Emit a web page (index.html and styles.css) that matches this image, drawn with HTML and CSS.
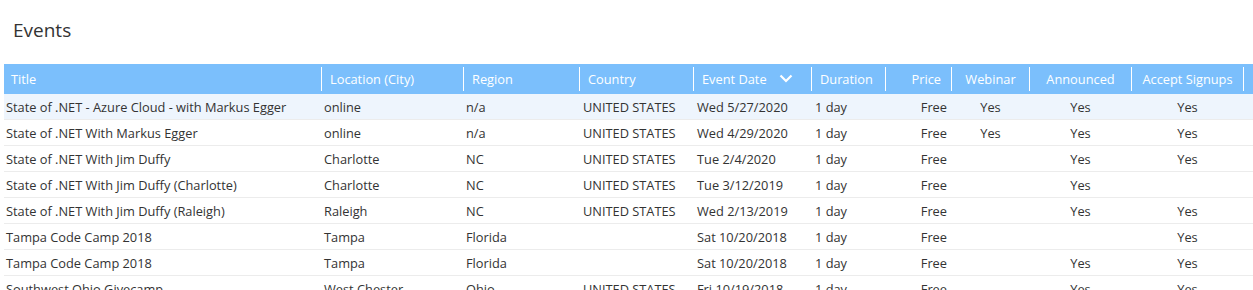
FILE: index.html
```html
<!DOCTYPE html>
<html>
<head>
<meta charset="utf-8">
<link rel="stylesheet" href="styles.css">
</head>
<body>
<div class="page">
  <h1 class="page-title">Events</h1>
  <table class="grid">
    <colgroup>
      <col class="c-title"><col class="c-loc"><col class="c-region"><col class="c-country"><col class="c-date"><col class="c-dur"><col class="c-price"><col class="c-web"><col class="c-ann"><col class="c-sign"><col class="c-fill">
    </colgroup>
    <thead>
      <tr>
        <th class="first">Title</th>
        <th>Location (City)</th>
        <th>Region</th>
        <th>Country</th>
        <th class="sorted"><span>Event Date</span><svg class="chev" width="14" height="9" viewBox="0 0 14 9"><path d="M1.5 1.5 L7 7 L12.5 1.5" fill="none" stroke="#fff" stroke-width="2.2"/></svg></th>
        <th>Duration</th>
        <th class="right">Price</th>
        <th class="center">Webinar</th>
        <th class="center">Announced</th>
        <th class="center">Accept Signups</th>
        <th></th>
      </tr>
    </thead>
    <tbody>
      <tr class="active">
        <td class="t">State of .NET - Azure Cloud - with Markus Egger</td><td>online</td><td>n/a</td><td>UNITED STATES</td><td>Wed 5/27/2020</td><td>1 day</td><td class="right">Free</td><td class="center">Yes</td><td class="center">Yes</td><td class="center">Yes</td><td></td>
      </tr>
      <tr>
        <td class="t">State of .NET With Markus Egger</td><td>online</td><td>n/a</td><td>UNITED STATES</td><td>Wed 4/29/2020</td><td>1 day</td><td class="right">Free</td><td class="center">Yes</td><td class="center">Yes</td><td class="center">Yes</td><td></td>
      </tr>
      <tr>
        <td class="t">State of .NET With Jim Duffy</td><td>Charlotte</td><td>NC</td><td>UNITED STATES</td><td>Tue 2/4/2020</td><td>1 day</td><td class="right">Free</td><td class="center"></td><td class="center">Yes</td><td class="center">Yes</td><td></td>
      </tr>
      <tr>
        <td class="t">State of .NET With Jim Duffy (Charlotte)</td><td>Charlotte</td><td>NC</td><td>UNITED STATES</td><td>Tue 3/12/2019</td><td>1 day</td><td class="right">Free</td><td class="center"></td><td class="center">Yes</td><td class="center"></td><td></td>
      </tr>
      <tr>
        <td class="t">State of .NET With Jim Duffy (Raleigh)</td><td>Raleigh</td><td>NC</td><td>UNITED STATES</td><td>Wed 2/13/2019</td><td>1 day</td><td class="right">Free</td><td class="center"></td><td class="center">Yes</td><td class="center">Yes</td><td></td>
      </tr>
      <tr>
        <td class="t">Tampa Code Camp 2018</td><td>Tampa</td><td>Florida</td><td></td><td>Sat 10/20/2018</td><td>1 day</td><td class="right">Free</td><td class="center"></td><td class="center"></td><td class="center">Yes</td><td></td>
      </tr>
      <tr>
        <td class="t">Tampa Code Camp 2018</td><td>Tampa</td><td>Florida</td><td></td><td>Sat 10/20/2018</td><td>1 day</td><td class="right">Free</td><td class="center"></td><td class="center">Yes</td><td class="center">Yes</td><td></td>
      </tr>
      <tr>
        <td class="t">Southwest Ohio Givecamp</td><td>West Chester</td><td>Ohio</td><td>UNITED STATES</td><td>Fri 10/19/2018</td><td>1 day</td><td class="right">Free</td><td class="center"></td><td class="center">Yes</td><td class="center">Yes</td><td></td>
      </tr>
    </tbody>
  </table>
</div>
</body>
</html>
```

FILE: styles.css
```css
html, body {
  margin: 0;
  padding: 0;
  background: #fff;
  overflow: hidden;
}
body {
  font-family: "Open Sans", "Noto Sans", sans-serif;
  color: #333;
}
.page {
  padding: 0 0 0 4px;
}
.page-title {
  margin: 0;
  padding: 16px 0 0 9px;
  height: 64px;
  box-sizing: border-box;
  font-size: 19px;
  font-weight: 400;
  line-height: 28px;
  color: #333;
}
.grid {
  table-layout: fixed;
  width: 1249px;
  border-collapse: separate;
  border-spacing: 0;
  font-size: 12.8px;
}
.c-title { width: 317px; }
.c-loc { width: 142px; }
.c-region { width: 116px; }
.c-country { width: 114px; }
.c-date { width: 118px; }
.c-dur { width: 74px; }
.c-price { width: 66px; }
.c-web { width: 78px; }
.c-ann { width: 102px; }
.c-sign { width: 112px; }
.c-fill { width: 10px; }

.grid th {
  height: 30px;
  padding: 0 4px 0 9px;
  text-align: left;
  font-weight: 400;
  color: #fff;
  white-space: nowrap;
  overflow: hidden;
  background: linear-gradient(#fff, #fff) left center / 1px 24px no-repeat, #7bbffc;
}
.grid th.first {
  padding-left: 7px;
  background: #7bbffc;
}
.grid th.right { text-align: right; padding-right: 10px; }
.grid th.center { text-align: center; padding: 0 2px 0 3px; }
.grid th.sorted span { display: inline-block; width: 77px; }
.chev { vertical-align: 1px; }

.grid td {
  height: 25px;
  padding: 0 3px 0 3px;
  border-bottom: 1px solid #ececec;
  white-space: nowrap;
  overflow: hidden;
  color: #333;
}
.grid td.t { padding-left: 2px; }
.grid td:nth-child(4), .grid td:nth-child(5), .grid td:nth-child(6) { padding-left: 4px; }
.grid td.right { text-align: right; padding-right: 4px; }
.grid td.center { text-align: center; padding: 0 1px 0 2px; }
.grid tr.active td { background: #eef5fd; }
```
